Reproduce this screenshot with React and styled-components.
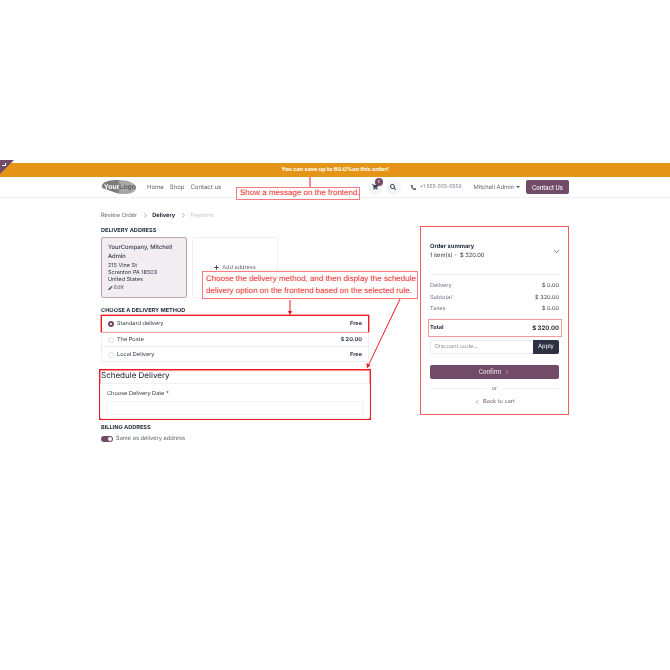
import styled, { createGlobalStyle } from 'styled-components';
import { FaShoppingCart, FaSearch, FaPhoneAlt, FaPen, FaPlus } from 'react-icons/fa';
import { ChevronRight, ChevronLeft, ChevronDown } from 'lucide-react';

const GlobalStyle = createGlobalStyle`
  html, body { margin: 0; padding: 0; background: #fff; }
  body {
    font-family: Inter, "Liberation Sans", sans-serif;
    color: #2f3744;
    text-rendering: geometricPrecision;
  }
  * { box-sizing: border-box; }
`;

// Скриншот снят с уменьшением, поэтому страница чуть размыта
const Page = styled.div`
  position: relative;
  width: 670px;
  height: 670px;
  overflow: hidden;
  padding-top: 163px;
  filter: blur(0.2px);
`;

// Полоса с сообщением о скидке
const Banner = styled.div`
  position: relative;
  height: 14px;
  background: #e49518;
  color: #fff;
  font-size: 5.6px;
  font-weight: 700;
  line-height: 14px;
  text-align: center;
`;

const Ribbon = styled.div`
  position: absolute;
  left: 0;
  top: -3px;
  width: 14px;
  height: 14px;
  background: #714b67;
  clip-path: polygon(0 0, 100% 0, 0 100%);
`;

const RibbonMark = styled.span`
  position: absolute;
  left: 2px;
  top: 0;
  width: 4px;
  height: 3px;
  border-right: 1px solid #fff;
  border-bottom: 1px solid #fff;
`;

const Header = styled.header`
  display: flex;
  align-items: center;
  height: 21px;
  padding: 0 101px;
  border-bottom: 1px solid #f1f1f3;
  font-size: 6px;
  color: #5f636c;
`;

const LogoWrap = styled.svg`
  width: 35px;
  height: 16px;
  margin-right: 11px;
`;

const LogoWord = styled.text`
  font-family: "Liberation Sans", sans-serif;
  font-size: 7px;
  font-weight: 700;
`;

const Nav = styled.nav`
  display: flex;
  gap: 6px;
`;

const HeaderRight = styled.div`
  display: flex;
  align-items: center;
  margin-left: auto;
`;

const RoundIcon = styled.div`
  position: relative;
  display: flex;
  align-items: center;
  justify-content: center;
  width: 15px;
  height: 15px;
  margin-right: 3px;
  border-radius: 50%;
  background: #f3f4f6;
  color: #374151;
  font-size: 6px;
`;

const CartBadge = styled.span`
  position: absolute;
  top: -2px;
  right: 0;
  width: 8px;
  height: 8px;
  border-radius: 50%;
  background: #714b67;
  color: #fff;
  font-size: 4px;
  font-weight: 700;
  line-height: 8px;
  text-align: center;
`;

const Phone = styled.div`
  display: flex;
  align-items: center;
  gap: 4px;
  margin: 0 12px 0 7px;
  font-size: 5px;
  color: #6b7280;
`;

const PhoneIcon = styled(FaPhoneAlt)`
  font-size: 5px;
  color: #374151;
`;

const UserMenu = styled.div`
  display: flex;
  align-items: center;
  gap: 2px;
  margin-right: 6px;
  font-size: 5.8px;
`;

const Caret = styled.span`
  width: 0;
  height: 0;
  border-left: 2px solid transparent;
  border-right: 2px solid transparent;
  border-top: 2px solid #4b5563;
`;

const ContactButton = styled.button`
  width: 43px;
  height: 14px;
  padding: 0;
  border: none;
  border-radius: 2px;
  background: #714b67;
  color: #fff;
  font: 500 5.8px Inter, sans-serif;
`;

const Main = styled.main`
  display: grid;
  grid-template-columns: 268px 149px;
  justify-content: space-between;
  align-items: start;
  width: 468px;
  margin-left: 101px;
`;

const Steps = styled.div`
  display: flex;
  align-items: center;
  height: 12px;
  margin: 11px 0 6px;
  font-size: 5.7px;
`;

const Step = styled.span`
  color: ${(p) => (p.$state === 'active' ? '#1f2937' : p.$state === 'next' ? '#c4c6ca' : '#6f5a6b')};
  font-weight: ${(p) => (p.$state === 'active' ? 700 : 400)};
`;

const StepArrow = styled(ChevronRight)`
  width: 7px;
  height: 7px;
  margin: 0 3.5px 0 4.5px;
  color: #6b7280;
`;

const SectionTitle = styled.h4`
  margin: 0;
  font-size: 5.6px;
  line-height: 8px;
  font-weight: 700;
  color: #1f2937;
  text-transform: uppercase;
`;

const Addresses = styled.div`
  display: flex;
  gap: 5px;
  margin-top: 2px;
`;

const AddressCard = styled.div`
  width: 86px;
  height: 61px;
  padding: 6px 6px 0;
  border: 1px solid #b6a5b2;
  border-radius: 2px;
  background: #f1edf0;
  font-size: 5.5px;
  line-height: 7.2px;
`;

const AddressName = styled.div`
  margin-bottom: 1px;
  font-size: 5.8px;
  line-height: 8.8px;
  font-weight: 500;
`;

const EditLink = styled.div`
  display: flex;
  align-items: center;
  gap: 1.5px;
  line-height: 8px;
  color: #5f636c;
`;

const AddCard = styled.div`
  display: flex;
  align-items: center;
  justify-content: center;
  gap: 3px;
  width: 86px;
  height: 61px;
  border: 1px solid #f1f1f3;
  border-radius: 2px;
  font-size: 5.6px;
  color: #5f636c;
`;

const AddIcon = styled(FaPlus)`
  font-size: 5px;
  color: #374151;
`;

const MethodTitle = styled(SectionTitle)`
  margin-top: 9px;
`;

const Methods = styled.div`
  border: 1px solid #eeeef0;
  border-radius: 2px;
`;

const MethodRow = styled.div`
  display: flex;
  align-items: center;
  gap: 3px;
  height: 15px;
  padding: 1px 6px 0;
  font-size: 5.6px;
  border-top: ${(p) => (p.$first ? 'none' : '1px solid #eeeef0')};
  box-shadow: ${(p) => (p.$marked ? '0 0 0 1.4px #f01a22' : 'none')};
`;

const Radio = styled.span`
  width: 6px;
  height: 6px;
  border-radius: 50%;
  border: ${(p) => (p.$checked ? '2px solid #714b67' : '1px solid #dfe0e3')};
  background: #fff;
`;

const MethodPrice = styled.span`
  margin-left: auto;
  font-weight: 700;
  color: #374151;
`;

const Schedule = styled.section`
  height: 51px;
  margin: 7px -2px 0;
  padding: 0 1px;
  box-shadow: inset 0 0 0 1.4px #f01a22;
`;

const ScheduleTitle = styled.h3`
  margin: 0;
  padding: 1px 0 0 1px;
  font-size: 8px;
  line-height: 11px;
  font-weight: 400;
  color: #111827;
`;

const ScheduleBody = styled.div`
  height: 36px;
  margin-top: 2px;
  padding: 7px 6px 0;
  border: 1px solid #f1f1f3;
  border-radius: 2px;
  font-size: 5.6px;
  line-height: 7px;
`;

const DateInput = styled.div`
  height: 14px;
  margin: 2.5px -1px 0;
  border: 1px solid #f1f1f3;
  border-radius: 2px;
`;

const BillingTitle = styled(SectionTitle)`
  margin-top: 4px;
`;

const SameRow = styled.div`
  display: flex;
  align-items: center;
  gap: 3px;
  margin-top: 3px;
  font-size: 5.7px;
  line-height: 8px;
  color: #5f636c;
`;

const Toggle = styled.span`
  display: flex;
  justify-content: flex-end;
  align-items: center;
  width: 12px;
  height: 6px;
  padding-right: 1px;
  border-radius: 3px;
  background: #714b67;
`;

const ToggleKnob = styled.span`
  width: 4px;
  height: 4px;
  border-radius: 50%;
  background: #fff;
`;

// Правая колонка с итогами заказа
const Summary = styled.aside`
  height: 189px;
  margin-top: 28px;
  padding: 14px 9px 0;
  border: 1px solid #f05c60;
`;

const SummaryHead = styled.div`
  display: flex;
  align-items: center;
  justify-content: space-between;
  height: 21px;
`;

const SummaryName = styled.div`
  font-size: 5.8px;
  line-height: 8.5px;
  font-weight: 700;
  color: #1f2937;
`;

const SummaryCount = styled.div`
  font-size: 5.7px;
  line-height: 8.5px;
`;

const SummaryChevron = styled(ChevronDown)`
  width: 9px;
  height: 9px;
  margin-right: -1.5px;
  color: #4b5563;
`;

const Divider = styled.hr`
  margin: 12px 0 7px;
  border: none;
  border-top: 1px solid #eeeef0;
`;

const Line = styled.div`
  display: flex;
  justify-content: space-between;
  height: 11.6px;
  font-size: 5.6px;
  line-height: 8px;
  color: #6b7280;
`;

const LineValue = styled.span`
  color: #374151;
`;

const TotalRow = styled.div`
  display: flex;
  justify-content: space-between;
  align-items: center;
  height: 18px;
  margin: 2px -3px 0 -2px;
  padding: 1px 2px 0 1px;
  border: 1px solid #f79a9c;
  font-size: 5.6px;
  font-weight: 700;
  color: #1f2937;
`;

const TotalAmount = styled.span`
  font-size: 6px;
`;

const Discount = styled.div`
  display: flex;
  height: 14px;
  margin-top: 3px;
  border: 1px solid #eeeef0;
  border-radius: 2px;
`;

const DiscountText = styled.span`
  flex: 1;
  padding-left: 4px;
  font-size: 5.6px;
  line-height: 13px;
  color: #8b8f97;
`;

const ApplyButton = styled.span`
  width: 26px;
  margin: -1px;
  border-radius: 0 2px 2px 0;
  background: #2c3142;
  color: #fff;
  font-size: 5.8px;
  line-height: 14px;
  text-align: center;
`;

const ConfirmButton = styled.button`
  display: flex;
  align-items: center;
  justify-content: center;
  gap: 3px;
  width: 100%;
  height: 14px;
  margin-top: 11px;
  padding: 0;
  border: none;
  border-radius: 2px;
  background: #714b67;
  color: #e6dfe4;
  font: 500 5.8px Inter, sans-serif;
`;

const SmallArrow = styled(ChevronRight)`
  width: 6px;
  height: 6px;
`;

const OrRow = styled.div`
  display: flex;
  align-items: center;
  gap: 6px;
  margin-top: 6px;
  font-size: 5.6px;
  line-height: 8px;
  color: #6b7280;

  &::before,
  &::after {
    content: '';
    flex: 1;
    border-top: 1px solid #f1f1f3;
  }
`;

const BackLink = styled.div`
  display: flex;
  align-items: center;
  justify-content: center;
  gap: 3px;
  margin-top: 5px;
  font-size: 5.6px;
  line-height: 8px;
  color: #6f5a6b;
`;

const BackArrow = styled(ChevronLeft)`
  width: 6px;
  height: 6px;
`;

// Красные пометки поверх страницы
const Note = styled.div`
  position: absolute;
  left: ${(p) => p.$left}px;
  top: ${(p) => p.$top}px;
  width: ${(p) => p.$width}px;
  height: ${(p) => p.$height}px;
  border: 1px solid #f47c7f;
  background: #fff;
  color: #f01a22;
  font-family: "Liberation Sans", Arial, sans-serif;
  font-size: 8px;
  line-height: 12px;
  white-space: nowrap;
`;

const NoteText = styled.div`
  margin-top: ${(p) => p.$shift}px;
  padding-left: 3px;
`;

const Arrows = styled.svg`
  position: absolute;
  left: 0;
  top: 0;
  width: 670px;
  height: 670px;
  pointer-events: none;
`;

const methods = [
  { name: 'Standard delivery', price: 'Free', checked: true },
  { name: 'The Poste', price: '$ 20.00' },
  { name: 'Local Delivery', price: 'Free' },
];

const lines = [
  ['Delivery', '$ 0.00'],
  ['Subtotal', '$ 320.00'],
  ['Taxes', '$ 0.00'],
];

const App = () => (
  <Page>
    <GlobalStyle />
    <Banner>
      <Ribbon />
      <RibbonMark />
      You can save up to 60.0%on this order!
    </Banner>
    <Header>
      <LogoWrap viewBox="0 0 35 16">
        <defs>
          <linearGradient id="logoFill" x1="0" x2="1" y1="0" y2="0">
            <stop offset="0.45" stopColor="#7c7c7c" />
            <stop offset="0.55" stopColor="#a8a8a8" />
          </linearGradient>
        </defs>
        <path d="M1 6 C3 2 10 1 18 1 C27 1 35 4 35 9 C35 14 27 15.5 21 15 C14 14.5 9 11 4 10 C1.5 9.5 0 8 1 6 Z" fill="url(#logoFill)" />
        <LogoWord x="3" y="9.5" fill="#fff">Your</LogoWord>
        <LogoWord x="18" y="10" fill="#5c5c5c">Logo</LogoWord>
      </LogoWrap>
      <Nav>
        <span>Home</span>
        <span>Shop</span>
        <span>Contact us</span>
      </Nav>
      <HeaderRight>
        <RoundIcon>
          <FaShoppingCart />
          <CartBadge>1</CartBadge>
        </RoundIcon>
        <RoundIcon>
          <FaSearch />
        </RoundIcon>
        <Phone>
          <PhoneIcon />
          +1 555-555-5556
        </Phone>
        <UserMenu>
          Mitchell Admin
          <Caret />
        </UserMenu>
        <ContactButton>Contact Us</ContactButton>
      </HeaderRight>
    </Header>
    <Main>
      <div>
        <Steps>
          <Step>Review Order</Step>
          <StepArrow />
          <Step $state="active">Delivery</Step>
          <StepArrow />
          <Step $state="next">Payment</Step>
        </Steps>
        <SectionTitle>Delivery address</SectionTitle>
        <Addresses>
          <AddressCard>
            <AddressName>YourCompany, Mitchell Admin</AddressName>
            215 Vine St
            <br />
            Scranton PA 18503
            <br />
            United States
            <EditLink>
              <FaPen size={4.5} />
              Edit
            </EditLink>
          </AddressCard>
          <AddCard>
            <AddIcon />
            Add address
          </AddCard>
        </Addresses>
        <MethodTitle>Choose a delivery method</MethodTitle>
        <Methods>
          {methods.map((m, i) => (
            <MethodRow key={m.name} $first={i === 0} $marked={m.checked}>
              <Radio $checked={m.checked} />
              {m.name}
              <MethodPrice>{m.price}</MethodPrice>
            </MethodRow>
          ))}
        </Methods>
        <Schedule>
          <ScheduleTitle>Schedule Delivery</ScheduleTitle>
          <ScheduleBody>
            Choose Delivery Date *
            <DateInput />
          </ScheduleBody>
        </Schedule>
        <BillingTitle>Billing address</BillingTitle>
        <SameRow>
          <Toggle>
            <ToggleKnob />
          </Toggle>
          Same as delivery address
        </SameRow>
      </div>
      <Summary>
        <SummaryHead>
          <div>
            <SummaryName>Order summary</SummaryName>
            <SummaryCount>1 item(s) - &nbsp;$ 320.00</SummaryCount>
          </div>
          <SummaryChevron />
        </SummaryHead>
        <Divider />
        {lines.map(([label, value]) => (
          <Line key={label}>
            {label}
            <LineValue>{value}</LineValue>
          </Line>
        ))}
        <TotalRow>
          Total
          <TotalAmount>$ 320.00</TotalAmount>
        </TotalRow>
        <Discount>
          <DiscountText>Discount code...</DiscountText>
          <ApplyButton>Apply</ApplyButton>
        </Discount>
        <ConfirmButton>
          Confirm
          <SmallArrow />
        </ConfirmButton>
        <OrRow>or</OrRow>
        <BackLink>
          <BackArrow />
          Back to cart
        </BackLink>
      </Summary>
    </Main>
    <Note $left={236} $top={187} $width={124} $height={13}>
      <NoteText $shift={-1}>Show a message on the frontend.</NoteText>
    </Note>
    <Note $left={202} $top={271} $width={216} $height={28}>
      <NoteText $shift={1}>
        Choose the delivery method, and then display the schedule
        <br />
        delivery option on the frontend based on the selected rule.
      </NoteText>
    </Note>
    <Arrows viewBox="0 0 670 670">
      <path d="M310 177 V187" stroke="#f01a22" strokeWidth="1" />
      <path d="M290 300 V312" stroke="#f01a22" strokeWidth="1" />
      <path d="M287.8 311 H292.2 L290 315 Z" fill="#f01a22" />
      <path d="M400 299 L369 364" stroke="#f01a22" strokeWidth="1" />
      <path d="M366.4 363 L370.5 365 L367 368.5 Z" fill="#f01a22" />
    </Arrows>
  </Page>
);

export default App;
